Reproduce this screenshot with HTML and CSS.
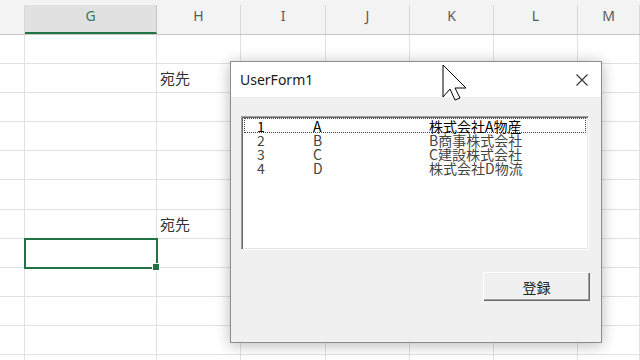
FILE: index.html
```html
<!DOCTYPE html>
<html>
<head>
  <meta charset="utf-8">
  <link rel="stylesheet" href="styles.css">
</head>
<body>

<div class="sheet">
  <div class="row head">
    <div class="c"></div>
    <div class="c selcol">G</div>
    <div class="c">H</div>
    <div class="c">I</div>
    <div class="c">J</div>
    <div class="c">K</div>
    <div class="c">L</div>
    <div class="c">M</div>
  </div>
  <div class="row"><div class="c"></div><div class="c"></div><div class="c"></div><div class="c"></div><div class="c"></div><div class="c"></div><div class="c"></div><div class="c"></div></div>
  <div class="row"><div class="c"></div><div class="c"></div><div class="c txt">宛先</div><div class="c"></div><div class="c"></div><div class="c"></div><div class="c"></div><div class="c"></div></div>
  <div class="row"><div class="c"></div><div class="c"></div><div class="c"></div><div class="c"></div><div class="c"></div><div class="c"></div><div class="c"></div><div class="c"></div></div>
  <div class="row"><div class="c"></div><div class="c"></div><div class="c"></div><div class="c"></div><div class="c"></div><div class="c"></div><div class="c"></div><div class="c"></div></div>
  <div class="row"><div class="c"></div><div class="c"></div><div class="c"></div><div class="c"></div><div class="c"></div><div class="c"></div><div class="c"></div><div class="c"></div></div>
  <div class="row tall"><div class="c"></div><div class="c"></div><div class="c"></div><div class="c"></div><div class="c"></div><div class="c"></div><div class="c"></div><div class="c"></div></div>
  <div class="row"><div class="c"></div><div class="c"></div><div class="c txt">宛先</div><div class="c"></div><div class="c"></div><div class="c"></div><div class="c"></div><div class="c"></div></div>
  <div class="row"><div class="c"></div><div class="c active"></div><div class="c"></div><div class="c"></div><div class="c"></div><div class="c"></div><div class="c"></div><div class="c"></div></div>
  <div class="row"><div class="c"></div><div class="c"></div><div class="c"></div><div class="c"></div><div class="c"></div><div class="c"></div><div class="c"></div><div class="c"></div></div>
  <div class="row"><div class="c"></div><div class="c"></div><div class="c"></div><div class="c"></div><div class="c"></div><div class="c"></div><div class="c"></div><div class="c"></div></div>
  <div class="row"><div class="c"></div><div class="c"></div><div class="c"></div><div class="c"></div><div class="c"></div><div class="c"></div><div class="c"></div><div class="c"></div></div>
  <div class="row"><div class="c"></div><div class="c"></div><div class="c"></div><div class="c"></div><div class="c"></div><div class="c"></div><div class="c"></div><div class="c"></div></div>
</div>

<div class="dialog">
  <div class="titlebar">
    <span class="title">UserForm1</span>
    <svg class="close" width="12" height="12" viewBox="0 0 12 12">
      <path d="M0.5 0.5 L11.5 11.5 M11.5 0.5 L0.5 11.5" stroke="#333" stroke-width="1.1" fill="none"/>
    </svg>
  </div>
  <div class="form-body">
    <div class="listbox">
      <div class="item focus"><span>1</span><span>A</span><span>株式会社A物産</span></div>
      <div class="item"><span>2</span><span>B</span><span>B商事株式会社</span></div>
      <div class="item"><span>3</span><span>C</span><span>C建設株式会社</span></div>
      <div class="item"><span>4</span><span>D</span><span>株式会社D物流</span></div>
    </div>
    <div class="actions">
      <button class="btn">登録</button>
    </div>
  </div>
</div>

<svg class="cursor" width="26" height="38" viewBox="0 0 26 38">
  <path d="M1 1 L1 33 L8 25 L13 36 L18 34 L13 24 L24 24 Z" fill="#fff" stroke="#000" stroke-width="1" stroke-linejoin="miter"/>
</svg>

</body>
</html>
```

FILE: styles.css
```css
* {
  box-sizing: border-box;
}

body {
  margin: 0;
  width: 640px;
  height: 360px;
  overflow: hidden;
  background: #fff;
  font-family: "Noto Sans", "Noto Sans CJK JP", sans-serif;
}

/* spreadsheet */
.sheet {
  width: 640px;
  height: 360px;
  overflow: hidden;
}

.row {
  display: grid;
  grid-template-columns: 25px 132px 84px 85px 84px 84px 84px 1fr;
  height: 29px;
}

.row.tall {
  height: 30px;
}

.c {
  border-right: 1px solid #e1e1e1;
  border-bottom: 1px solid #e1e1e1;
}

.txt {
  font-family: "Noto Sans CJK JP", sans-serif;
  font-size: 15px;
  color: #333;
  padding-left: 3px;
  line-height: 27px;
}

.active {
  position: relative;
  outline: 2px solid #217346;
  outline-offset: -1px;
}

.active::after {
  content: "";
  position: absolute;
  right: -4px;
  bottom: -4px;
  width: 6px;
  height: 6px;
  background: #217346;
  border: 1px solid #fff;
}

.head {
  height: 35px;
  padding-top: 5px;
  background: #f3f3f3;
  border-bottom: 1px solid #c6c6c6;
}

.head .c {
  border-bottom: none;
  border-right: 1px solid #d9d9d9;
  text-align: center;
  font-size: 14px;
  line-height: 22px;
  color: #5a5a5a;
}

.head .selcol {
  background: #e1e1e1;
  color: #3c7a57;
  border-bottom: 2px solid #217346;
  border-right-color: #c6c6c6;
}

/* user form */
.dialog {
  position: absolute;
  left: 230px;
  top: 61px;
  width: 372px;
  height: 282px;
  border: 1px solid #8c8c8c;
  background: #f0f0f0;
  box-shadow: 0 2px 14px rgba(0, 0, 0, 0.28);
  display: flex;
  flex-direction: column;
}

.titlebar {
  height: 35px;
  background: #fff;
  display: flex;
  align-items: center;
  justify-content: space-between;
  padding: 0 13px 0 9px;
}

.title {
  font-size: 14px;
  color: #1a1a1a;
}

.form-body {
  flex: 1;
  padding: 19px 11px 0 10px;
}

.listbox {
  width: 348px;
  height: 134px;
  background: #fff;
  border-top: 1px solid #a0a0a0;
  border-left: 1px solid #a0a0a0;
  border-right: 1px solid #fff;
  border-bottom: 1px solid #fff;
  box-shadow: inset 1px 1px 0 #696969, inset -1px -1px 0 #e3e3e3;
  padding: 1px 2px 0 2px;
  font-family: "Noto Sans CJK JP", sans-serif;
  font-size: 14px;
  color: #444;
}

.item {
  display: grid;
  grid-template-columns: 56px 116px 1fr;
  height: 14px;
  line-height: 14px;
  padding-left: 13px;
}

.item.focus {
  height: 15px;
  color: #000;
  border: 1px dotted #444;
  padding-left: 12px;
}

.actions {
  display: flex;
  justify-content: flex-end;
  margin-top: 22px;
}

.btn {
  width: 107px;
  height: 29px;
  background: #f0f0f0;
  border: none;
  box-shadow: inset 1px 1px 0 #fff, inset -1px -1px 0 #696969, inset -2px -2px 0 #a0a0a0;
  font-family: "Noto Sans CJK JP", sans-serif;
  font-size: 14px;
  color: #222;
  padding: 0;
}

.cursor {
  position: absolute;
  left: 442px;
  top: 64px;
}
```
